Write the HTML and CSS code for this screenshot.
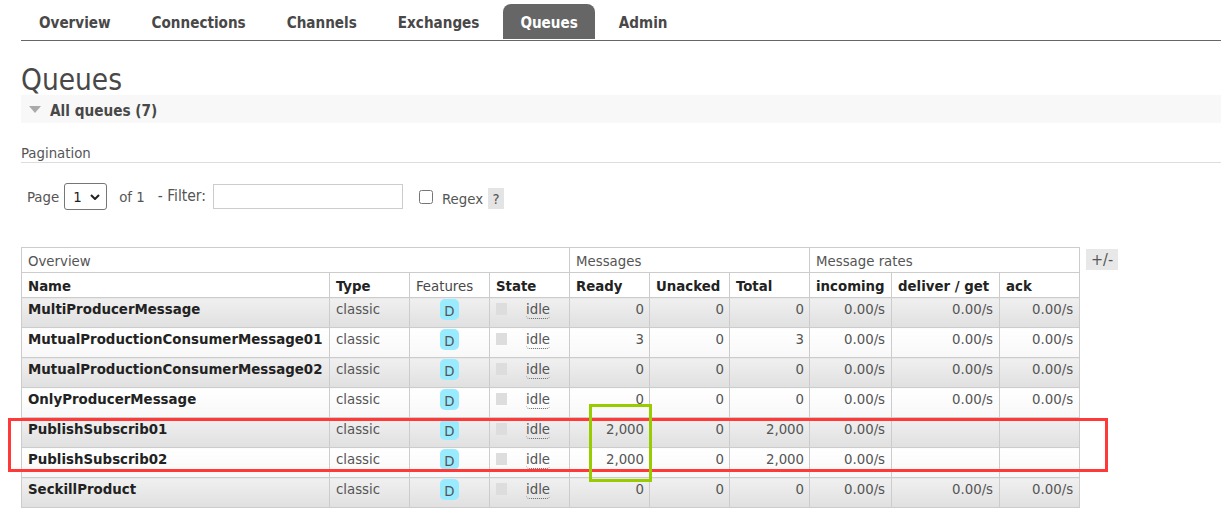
FILE: index.html
```html
<!DOCTYPE html>
<html lang="en">
<head>
    <meta charset="UTF-8">
    <title>Queues</title>
    <link rel="stylesheet" href="styles.css">
</head>
<body>
    <nav class="tabs">
        <a>Overview</a>
        <a>Connections</a>
        <a>Channels</a>
        <a>Exchanges</a>
        <a class="selected">Queues</a>
        <a>Admin</a>
    </nav>

    <h1>Queues</h1>
    <div class="section-title"><span class="triangle"></span><span class="section-text">All queues (7)</span></div>

    <h3 class="pagination-title">Pagination</h3>
    <div class="filter-row">
        <span class="page-label">Page</span>
        <span class="fake-select">1
            <svg width="10" height="6" viewBox="0 0 10 6"><path d="M1 1l4 4 4-4" fill="none" stroke="#222" stroke-width="2"/></svg>
        </span>
        <span class="of-label">of 1</span>
        <span class="filter-label">- Filter:</span>
        <input class="filter-input" type="text">
        <input class="regex-check" type="checkbox">
        <span class="regex-label">Regex</span>
        <span class="help">?</span>
    </div>

    <div class="table-wrap">
        <table class="list">
            <colgroup>
                <col class="c-name"><col class="c-type"><col class="c-feat"><col class="c-state">
                <col class="c-num"><col class="c-num"><col class="c-num">
                <col class="c-inc"><col class="c-del"><col class="c-ack">
            </colgroup>
            <thead>
                <tr class="group">
                    <th colspan="4">Overview</th>
                    <th colspan="3">Messages</th>
                    <th colspan="3">Message rates</th>
                </tr>
                <tr class="names">
                    <th>Name</th><th>Type</th><th class="plain">Features</th><th>State</th>
                    <th>Ready</th><th>Unacked</th><th>Total</th>
                    <th>incoming</th><th>deliver / get</th><th>ack</th>
                </tr>
            </thead>
            <tbody>
                <tr class="alt1">
                    <td class="name">MultiProducerMessage</td><td>classic</td><td class="feat"><span class="badge">D</span></td>
                    <td class="state"><span class="dot"></span><span class="idle">idle</span></td>
                    <td class="num">0</td><td class="num">0</td><td class="num">0</td>
                    <td class="num">0.00/s</td><td class="num">0.00/s</td><td class="num">0.00/s</td>
                </tr>
                <tr class="alt2">
                    <td class="name">MutualProductionConsumerMessage01</td><td>classic</td><td class="feat"><span class="badge">D</span></td>
                    <td class="state"><span class="dot"></span><span class="idle">idle</span></td>
                    <td class="num">3</td><td class="num">0</td><td class="num">3</td>
                    <td class="num">0.00/s</td><td class="num">0.00/s</td><td class="num">0.00/s</td>
                </tr>
                <tr class="alt1">
                    <td class="name">MutualProductionConsumerMessage02</td><td>classic</td><td class="feat"><span class="badge">D</span></td>
                    <td class="state"><span class="dot"></span><span class="idle">idle</span></td>
                    <td class="num">0</td><td class="num">0</td><td class="num">0</td>
                    <td class="num">0.00/s</td><td class="num">0.00/s</td><td class="num">0.00/s</td>
                </tr>
                <tr class="alt2">
                    <td class="name">OnlyProducerMessage</td><td>classic</td><td class="feat"><span class="badge">D</span></td>
                    <td class="state"><span class="dot"></span><span class="idle">idle</span></td>
                    <td class="num">0</td><td class="num">0</td><td class="num">0</td>
                    <td class="num">0.00/s</td><td class="num">0.00/s</td><td class="num">0.00/s</td>
                </tr>
                <tr class="alt1">
                    <td class="name">PublishSubscrib01</td><td>classic</td><td class="feat"><span class="badge">D</span></td>
                    <td class="state"><span class="dot"></span><span class="idle">idle</span></td>
                    <td class="num">2,000</td><td class="num">0</td><td class="num">2,000</td>
                    <td class="num">0.00/s</td><td class="num"></td><td class="num"></td>
                </tr>
                <tr class="alt2">
                    <td class="name">PublishSubscrib02</td><td>classic</td><td class="feat"><span class="badge">D</span></td>
                    <td class="state"><span class="dot"></span><span class="idle">idle</span></td>
                    <td class="num">2,000</td><td class="num">0</td><td class="num">2,000</td>
                    <td class="num">0.00/s</td><td class="num"></td><td class="num"></td>
                </tr>
                <tr class="alt1">
                    <td class="name">SeckillProduct</td><td>classic</td><td class="feat"><span class="badge">D</span></td>
                    <td class="state"><span class="dot"></span><span class="idle">idle</span></td>
                    <td class="num">0</td><td class="num">0</td><td class="num">0</td>
                    <td class="num">0.00/s</td><td class="num">0.00/s</td><td class="num">0.00/s</td>
                </tr>
            </tbody>
        </table>
        <span class="plus-minus">+/-</span>
    </div>

    <!-- hand drawn marks on the screenshot -->
    <div class="mark mark-red"></div>
    <div class="mark mark-green"></div>
</body>
</html>
```

FILE: styles.css
```css
* {
    margin: 0;
    padding: 0;
    box-sizing: border-box;
}

body {
    font-family: "DejaVu Sans", Verdana, sans-serif;
    font-stretch: condensed;
    font-size: 14.8px;
    color: #555;
    background: #fff;
    padding: 4px 0 0 21px;
    overflow: hidden;
}

/* Tabs */
.tabs {
    display: flex;
    gap: 7px;
    height: 37px;
    padding-left: 1px;
    border-bottom: 1px solid #666;
}

.tabs a {
    padding: 10px 17px 0;
    height: 35px;
    font-size: 15.1px;
    font-weight: bold;
    color: #484848;
}

.tabs a.selected {
    background: #666;
    color: #fff;
    border-radius: 8px 8px 0 0;
}

h1 {
    font-size: 29.5px;
    font-weight: normal;
    line-height: 30px;
    margin-top: 24px;
    color: #484848;
}

.section-title {
    display: flex;
    align-items: center;
    height: 28px;
    padding-left: 8px;
    background: #f8f8f8;
    font-size: 15.2px;
    font-weight: bold;
    color: #484848;
}

.section-text {
    padding-top: 3px;
}

.triangle {
    width: 0;
    height: 0;
    margin-right: 9px;
    border-left: 6px solid transparent;
    border-right: 6px solid transparent;
    border-top: 7px solid #aaa;
}

.pagination-title {
    margin-top: 21px;
    height: 19px;
    font-size: 14.8px;
    font-weight: normal;
    line-height: 18px;
    border-bottom: 1px solid #ddd;
}

/* Filter row */
.filter-row {
    display: flex;
    align-items: center;
    height: 27px;
    margin-top: 20px;
    padding-left: 6px;
}

.fake-select {
    display: flex;
    align-items: center;
    justify-content: space-between;
    width: 43px;
    height: 27px;
    margin-left: 5px;
    padding: 0 6px 0 8px;
    border: 1px solid #767676;
    border-radius: 3px;
    color: #222;
}

.of-label {
    margin-left: 12px;
}

.filter-label {
    margin-left: 13px;
    font-size: 15.5px;
    position: relative;
    top: -1px;
}

.filter-input {
    width: 190px;
    height: 25px;
    margin-left: 7px;
    border: 1px solid #ccc;
}

.regex-check {
    width: 14px;
    height: 14px;
    margin-left: 16px;
}

.regex-label {
    margin-left: 9px;
    position: relative;
    top: 2px;
}

.help {
    width: 16px;
    height: 21px;
    margin-left: 5px;
    background: #e4e4e4;
    text-align: center;
    line-height: 21px;
    position: relative;
    top: 2px;
}

/* Table */
.table-wrap {
    display: flex;
    align-items: flex-start;
    margin-top: 37px;
}

table.list {
    width: 1058px;
    table-layout: fixed;
    border-collapse: collapse;
}

.c-name { width: 308px; }
.c-type, .c-feat, .c-state, .c-num { width: 80px; }
.c-inc { width: 82px; }
.c-del { width: 108px; }
.c-ack { width: 80px; }

th, td {
    border: 1px solid #ccc;
    padding: 0 6px;
    text-align: left;
    white-space: nowrap;
    vertical-align: top;
}

.group th {
    height: 25px;
    padding-top: 1px;
    font-weight: normal;
    line-height: 23px;
}

.names th {
    height: 24px;
    padding-top: 1px;
    color: #222;
    line-height: 23px;
}

.names th.plain {
    font-weight: normal;
    color: #484848;
}

tbody tr {
    height: 30px;
}

td {
    line-height: 22px;
}

tr.alt1 td {
    background: linear-gradient(#f0f0f0, #e0e0e0);
}

tr.alt2 td {
    background: linear-gradient(#fff, #f8f8f8);
}

td.name {
    font-size: 14.85px;
    font-weight: bold;
    color: #222;
}

td.num {
    text-align: right;
}

/* Ready, Unacked, Total */
td.num:nth-child(-n+7) {
    padding-right: 5px;
}

td.feat {
    text-align: center;
    padding-top: 1px;
}

.badge {
    display: inline-block;
    width: 19px;
    height: 21px;
    line-height: 23px;
    background: #99ebff;
    border-radius: 5px;
    text-align: center;
    vertical-align: top;
}

.dot {
    display: inline-block;
    width: 11px;
    height: 12px;
    margin-top: 5px;
    background: #ddd;
    vertical-align: top;
}

.idle {
    display: inline-block;
    margin-left: 19px;
    line-height: 19px;
    border-bottom: 1px dotted #666;
    border-radius: 0 0 4px 4px;
}

.plus-minus {
    width: 32px;
    height: 21px;
    margin: 2px 0 0 6px;
    background: #e8e8e8;
    text-align: center;
    font-size: 16px;
    line-height: 21px;
}

/* Marks on top of the screenshot */
.mark {
    position: absolute;
    border-style: solid;
    border-width: 3px;
}

.mark-red {
    left: 8px;
    top: 418px;
    width: 1100px;
    height: 54px;
    border-color: #ff3838;
}

.mark-green {
    left: 589px;
    top: 404px;
    width: 63px;
    height: 78px;
    border-color: #99cc00;
}
```
